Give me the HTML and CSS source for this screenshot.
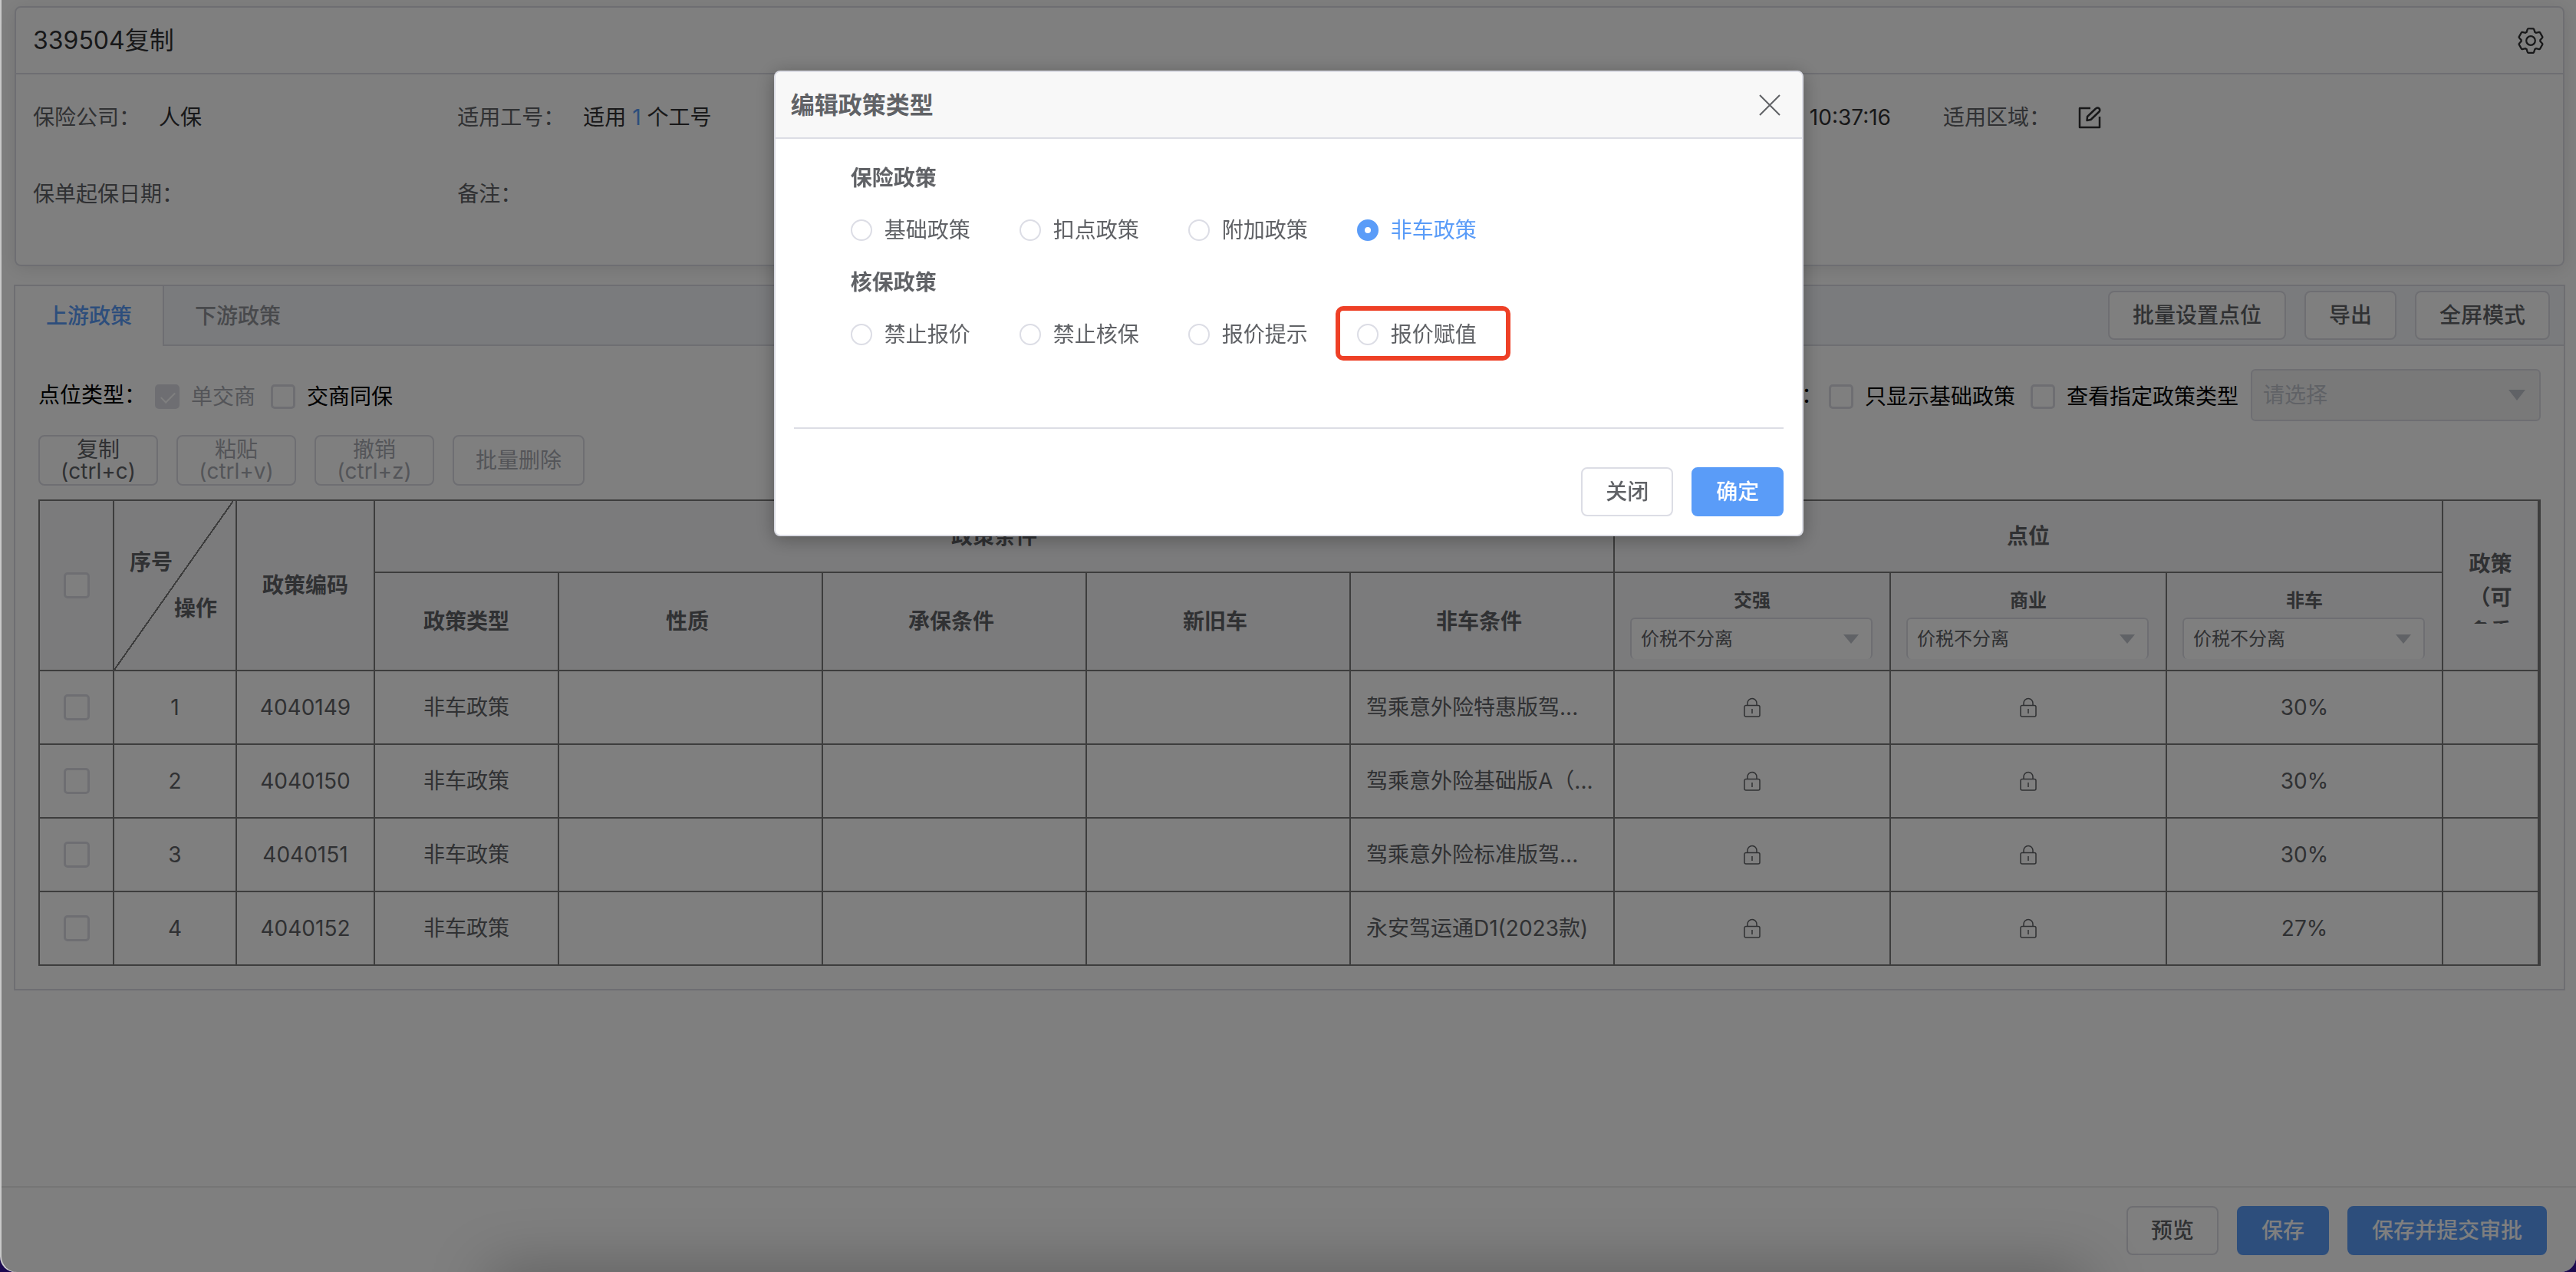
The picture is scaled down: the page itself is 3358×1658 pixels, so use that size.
FILE: index.html
```html
<!doctype html>
<html lang="zh-CN">

<head>
    <meta charset="UTF-8">
    <title>339504复制</title>
    <link rel="stylesheet" href="styles.css">
</head>

<body>
    <!-- icons -->
    <svg width="0" height="0" class="sprite">
        <symbol id="lock" viewBox="0 0 24 26">
            <path d="M4 10.500h16a2 2 0 0 1 2 2V23a2 2 0 0 1-2 2H4a2 2 0 0 1-2-2V12.500a2 2 0 0 1 2-2zM6 10V7.500a6 6 0 0 1 12 0V10M12 15v6" fill="none" stroke="currentColor" stroke-width="1.500" />
        </symbol>
    </svg>

    <div class="page">
        <section class="card">
            <div class="card-header">
                <span>339504复制</span>
                <button class="icon-btn" aria-label="设置">
                    <svg width="36" height="36" viewBox="0 0 1024 1024" fill="none" stroke="currentColor" stroke-width="64">
                        <path d="M600.704 64a32 32 0 0 1 30.464 22.208l35.2 109.376c14.784 7.232 28.928 15.36 42.432 24.512l112.384-24.192a32 32 0 0 1 34.432 15.36L944.32 364.8a32 32 0 0 1-4.032 37.504l-77.12 85.12a357.12 357.12 0 0 1 0 49.024l77.12 85.248a32 32 0 0 1 4.032 37.504l-88.704 153.6a32 32 0 0 1-34.432 15.296L708.8 803.904c-13.44 9.088-27.648 17.28-42.368 24.512l-35.264 109.376A32 32 0 0 1 600.704 960H423.296a32 32 0 0 1-30.464-22.208L357.696 828.48a351.616 351.616 0 0 1-42.56-24.64l-112.32 24.256a32 32 0 0 1-34.432-15.36L79.68 659.2a32 32 0 0 1 4.032-37.504l77.12-85.248a357.12 357.12 0 0 1 0-48.896l-77.12-85.248A32 32 0 0 1 79.68 364.8l88.704-153.6a32 32 0 0 1 34.432-15.296l112.32 24.256c13.568-9.152 27.776-17.408 42.56-24.64l35.2-109.312A32 32 0 0 1 423.232 64z" />
                        <circle cx="512" cy="512" r="165" />
                    </svg>
                </button>
            </div>
            <div class="card-body">
                <div class="info"><span class="info-label">保险公司：</span><span>人保</span></div>
                <div class="info"><span class="info-label">适用工号：</span><span>适用 <a href="#">1</a> 个工号</span></div>
                <div class="info info-time"><span>8 10:37:16</span></div>
                <div class="info"><span class="info-label">适用区域：</span>
                    <button class="icon-btn" aria-label="编辑适用区域">
                        <svg width="30" height="30" viewBox="0 0 30 30" fill="none" stroke="currentColor" stroke-width="2.500" stroke-linejoin="round">
                            <path d="M16 3H2v25h26V14" />
                            <path d="M23 3.500a3 3 0 0 1 4.500 4L16.500 18l-5 1 .5-5z" />
                        </svg>
                    </button>
                </div>
                <div class="info"><span class="info-label">保单起保日期：</span></div>
                <div class="info"><span class="info-label">备注：</span></div>
            </div>
        </section>

        <section class="panel">
            <div class="tabs">
                <button class="tab active">上游政策</button>
                <button class="tab">下游政策</button>
                <div class="tabs-right">
                    <button class="btn">批量设置点位</button>
                    <button class="btn">导出</button>
                    <button class="btn">全屏模式</button>
                </div>
            </div>

            <div class="panel-body">
                <div class="filters">
                    <span class="filter-title">点位类型：</span>
                    <label class="check disabled"><input type="checkbox" checked disabled>单交商</label>
                    <label class="check"><input type="checkbox">交商同保</label>
                    <div class="filters-right">
                        <span>：</span>
                        <label class="check"><input type="checkbox">只显示基础政策</label>
                        <label class="check"><input type="checkbox">查看指定政策类型</label>
                        <select class="select type-select" disabled aria-label="政策类型">
                            <option>请选择</option>
                        </select>
                    </div>
                </div>

                <div class="tools">
                    <button class="btn tool">复制<br>(ctrl+c)</button>
                    <button class="btn tool" disabled>粘贴<br>(ctrl+v)</button>
                    <button class="btn tool" disabled>撤销<br>(ctrl+z)</button>
                    <button class="btn tool wide" disabled>批量删除</button>
                </div>

                <table class="grid">
                    <colgroup>
                        <col class="c-check">
                        <col class="c-index">
                        <col class="c-code">
                        <col class="c-type">
                        <col class="c-cond">
                        <col class="c-cond">
                        <col class="c-cond">
                        <col class="c-cond">
                        <col class="c-point">
                        <col class="c-point">
                        <col class="c-point">
                        <col>
                    </colgroup>
                    <thead>
                        <tr class="head-top">
                            <th rowspan="2"><input type="checkbox" aria-label="全选"></th>
                            <th rowspan="2" class="diagonal">
                                <div class="th-index">序号</div>
                                <div class="th-action">操作</div>
                            </th>
                            <th rowspan="2">政策编码</th>
                            <th colspan="5">政策条件</th>
                            <th colspan="3">点位</th>
                            <th rowspan="2">
                                <div class="th-clip">政策（可多重</div>
                            </th>
                        </tr>
                        <tr class="head-sub">
                            <th>政策类型</th>
                            <th class="cond">性质</th>
                            <th class="cond">承保条件</th>
                            <th class="cond">新旧车</th>
                            <th class="cond">非车条件</th>
                            <th class="point">
                                <label for="p1">交强</label>
                                <select id="p1" class="select"><option>价税不分离</option></select>
                            </th>
                            <th class="point">
                                <label for="p2">商业</label>
                                <select id="p2" class="select"><option>价税不分离</option></select>
                            </th>
                            <th class="point">
                                <label for="p3">非车</label>
                                <select id="p3" class="select"><option>价税不分离</option></select>
                            </th>
                        </tr>
                    </thead>
                    <tbody>
                        <tr>
                            <td><input type="checkbox" aria-label="选择 1"></td>
                            <td>1</td>
                            <td>4040149</td>
                            <td>非车政策</td>
                            <td></td>
                            <td></td>
                            <td></td>
                            <td class="long">驾乘意外险特惠版驾...</td>
                            <td><svg class="lock"><use href="#lock" /></svg></td>
                            <td><svg class="lock"><use href="#lock" /></svg></td>
                            <td>30%</td>
                            <td></td>
                        </tr>
                        <tr>
                            <td><input type="checkbox" aria-label="选择 2"></td>
                            <td>2</td>
                            <td>4040150</td>
                            <td>非车政策</td>
                            <td></td>
                            <td></td>
                            <td></td>
                            <td class="long">驾乘意外险基础版A（...</td>
                            <td><svg class="lock"><use href="#lock" /></svg></td>
                            <td><svg class="lock"><use href="#lock" /></svg></td>
                            <td>30%</td>
                            <td></td>
                        </tr>
                        <tr>
                            <td><input type="checkbox" aria-label="选择 3"></td>
                            <td>3</td>
                            <td>4040151</td>
                            <td>非车政策</td>
                            <td></td>
                            <td></td>
                            <td></td>
                            <td class="long">驾乘意外险标准版驾...</td>
                            <td><svg class="lock"><use href="#lock" /></svg></td>
                            <td><svg class="lock"><use href="#lock" /></svg></td>
                            <td>30%</td>
                            <td></td>
                        </tr>
                        <tr>
                            <td><input type="checkbox" aria-label="选择 4"></td>
                            <td>4</td>
                            <td>4040152</td>
                            <td>非车政策</td>
                            <td></td>
                            <td></td>
                            <td></td>
                            <td class="long">永安驾运通D1(2023款)</td>
                            <td><svg class="lock"><use href="#lock" /></svg></td>
                            <td><svg class="lock"><use href="#lock" /></svg></td>
                            <td>27%</td>
                            <td></td>
                        </tr>
                    </tbody>
                </table>
            </div>
        </section>

        <footer class="footer">
            <button class="btn">预览</button>
            <button class="btn primary">保存</button>
            <button class="btn primary">保存并提交审批</button>
        </footer>
    </div>

    <div class="mask">
        <div class="dialog" role="dialog" aria-labelledby="dialog-title">
            <div class="dialog-header">
                <span id="dialog-title">编辑政策类型</span>
                <button class="icon-btn" aria-label="关闭窗口">
                    <svg width="28" height="28" viewBox="0 0 28 28" stroke="currentColor" stroke-width="2">
                        <path d="M1 1l26 26M27 1L1 27" />
                    </svg>
                </button>
            </div>
            <div class="dialog-body">
                <h4>保险政策</h4>
                <div class="radios">
                    <label class="radio"><input type="radio" name="policy">基础政策</label>
                    <label class="radio"><input type="radio" name="policy">扣点政策</label>
                    <label class="radio"><input type="radio" name="policy">附加政策</label>
                    <label class="radio"><input type="radio" name="policy" checked>非车政策</label>
                </div>
                <h4>核保政策</h4>
                <div class="radios">
                    <label class="radio"><input type="radio" name="policy">禁止报价</label>
                    <label class="radio"><input type="radio" name="policy">禁止核保</label>
                    <label class="radio"><input type="radio" name="policy">报价提示</label>
                    <label class="radio marked"><input type="radio" name="policy">报价赋值</label>
                </div>
            </div>
            <div class="dialog-footer">
                <button class="btn">关闭</button>
                <button class="btn primary">确定</button>
            </div>
        </div>
    </div>
    <div class="dock-shadow"></div>
</body>

</html>
```

FILE: styles.css
```css
* {
    box-sizing: border-box;
}

html,
body {
    height: 100%;
}

html {
    background-color: #1c0a50;
}

body {
    margin: 0;
    border-left: 2px solid #c8c8c8;
    border-radius: 0 0 20px 20px;
    background-color: #fff;
    color: #303133;
    font: 28px/40px Inter, "Noto Sans CJK SC", sans-serif;
    overflow: hidden;
}

button,
select {
    font: inherit;
    color: inherit;
}

a {
    color: #5a9cf8;
    text-decoration: none;
}

.sprite {
    position: absolute;
}

.page {
    display: flex;
    flex-direction: column;
    min-height: 100%;
    padding-top: 8px;
}

.icon-btn {
    display: flex;
    padding: 0;
    border: 0;
    background: none;
}

/* buttons */
.btn {
    height: 64px;
    padding: 0 30px;
    border: 2px solid #dcdde5;
    border-radius: 8px;
    background-color: #fff;
    color: #606266;
    font-weight: 500;
    white-space: nowrap;
}

.btn.primary {
    border-color: #5a9cf8;
    background-color: #5a9cf8;
    color: #fff;
}

/* checkboxes, radios, selects */
input[type=checkbox] {
    appearance: none;
    display: block;
    width: 32px;
    height: 32px;
    margin: 0;
    border: 3px solid #dcdde5;
    border-radius: 5px;
    background-color: #fff;
}

input[type=checkbox]:checked {
    position: relative;
    background-color: #dcdde5;
}

input[type=checkbox]:checked::after {
    content: "";
    position: absolute;
    left: 9px;
    top: 3px;
    width: 8px;
    height: 16px;
    border: solid #fff;
    border-width: 0 2px 2px 0;
    transform: rotate(45deg);
}

input[type=radio] {
    appearance: none;
    width: 28px;
    height: 28px;
    margin: 0;
    border: 2px solid #dcdde5;
    border-radius: 50%;
    background-color: #fff;
}

input[type=radio]:checked {
    border: 10px solid #5a9cf8;
}

.select {
    appearance: none;
    border: 2px solid #dcdde5;
    border-radius: 6px;
    background: #fff url("data:image/svg+xml,%3Csvg xmlns='http://www.w3.org/2000/svg' width='22' height='14'%3E%3Cpath d='M0 0h22L11 14z' fill='%23c0c4cc'/%3E%3C/svg%3E") no-repeat right 18px center;
}

/* summary card */
.card {
    margin: 0 15px 24px 17px;
    border: 2px solid #dcdde5;
    border-radius: 8px;
    box-shadow: 0 4px 24px rgba(0, 0, 0, .1);
}

.card-header {
    display: flex;
    align-items: center;
    justify-content: space-between;
    height: 87px;
    padding: 0 24px 0 22px;
    border-bottom: 2px solid #dcdde5;
    font-size: 32px;
}

.card-body {
    display: grid;
    grid-template-columns: 2fr 2fr 5fr 3fr;
    grid-auto-rows: 100px;
    padding: 6px 0 42px;
}

.info {
    display: flex;
    align-items: center;
    padding-left: 22px;
    white-space: nowrap;
}

.info-label {
    margin-right: 24px;
    color: #606266;
}

.info .icon-btn {
    margin-left: 12px;
}

.info-time {
    justify-content: flex-end;
    padding-right: 46px;
}

/* tabs */
.panel {
    margin: 0 14px 0 16px;
    border: 2px solid #dcdde5;
    padding-bottom: 30px;
}

.tabs {
    display: flex;
    height: 78px;
    border-bottom: 2px solid #dcdde5;
    background-color: #f5f7fa;
}

.tab {
    height: 78px;
    padding: 0 40px;
    border: 0;
    background: none;
    color: #909399;
    font-weight: 500;
}

.tab.active {
    border-right: 2px solid #dcdde5;
    background-color: #fff;
    color: #5a9cf8;
}

.tabs-right {
    display: flex;
    align-items: center;
    gap: 24px;
    margin-left: auto;
    padding-right: 18px;
}

.panel-body {
    padding: 30px 30px 0;
}

.filters {
    display: flex;
    align-items: center;
    gap: 20px;
    height: 68px;
    color: #000;
}

.filter-title {
    margin-right: -8px;
}

.filters-right {
    display: flex;
    align-items: center;
    gap: 20px;
    margin-left: auto;
}

.filters-right > span {
    margin-right: -12px;
}

.check {
    display: flex;
    align-items: center;
    gap: 15px;
    padding-top: 4px;
}

.check.disabled {
    color: #a8abb2;
}

.type-select {
    width: 378px;
    height: 68px;
    margin-left: -4px;
    padding: 0 14px;
    background-color: #f2f2f3;
    color: #c0c4cc;
    opacity: 1;
}

.tools {
    display: flex;
    gap: 24px;
    margin: 18px 0;
}

.tool {
    width: 156px;
    height: 66px;
    padding: 0;
    color: #606266;
    font-weight: 400;
    line-height: 28px;
}

.tool.wide {
    width: 172px;
}

.tool:disabled {
    color: #a8abb2;
}

/* policy table */
.grid {
    width: 100%;
    border-collapse: collapse;
    table-layout: fixed;
    border: 2px solid #7a7a7a;
    border-right-width: 4px;
    color: #606266;
    text-align: center;
}

.c-check { width: 97px; }
.c-index { width: 160px; }
.c-code { width: 180px; }
.c-type { width: 240px; }
.c-cond { width: 344px; }
.c-point { width: 360px; }

.grid th,
.grid td {
    padding: 0;
    border: 2px solid #7a7a7a;
}

.grid th {
    background-color: #f7f7f8;
    font-weight: 700;
}

.grid td {
    height: 96px;
}

.grid input {
    width: 34px;
    height: 34px;
    margin: 0 auto;
}

.head-top {
    height: 94px;
}

.head-sub {
    height: 128px;
}

.grid .cond {
    padding-right: 8px;
}

.grid .diagonal {
    background: #f7f7f8 linear-gradient(to bottom right, transparent calc(50% - 1px), #7a7a7a calc(50% - 1px), #7a7a7a calc(50% + 1px), transparent calc(50% + 1px)) no-repeat 0 0 / 155px 100%;
}

.th-index {
    padding: 0 0 20px 20px;
    text-align: left;
}

.th-action {
    padding-right: 24px;
    text-align: right;
}

.th-clip {
    height: 100px;
    padding: 0 24px;
    overflow: hidden;
    line-height: 44px;
}

.grid .point {
    padding-top: 4px;
    font-size: 24px;
    line-height: 36px;
}

.point label {
    display: block;
}

.point select {
    display: block;
    width: 316px;
    height: 54px;
    margin: 4px 0 0 20px;
    padding: 0 12px;
    border-bottom: 0;
    font-weight: 400;
    background-position: right 16px center;
    background-size: 20px 12px;
}

.grid .long {
    padding: 0 20px;
    text-align: left;
    white-space: nowrap;
}

.lock {
    display: block;
    width: 24px;
    height: 26px;
    margin: 0 auto;
}

/* bottom bar */
.footer {
    display: flex;
    justify-content: flex-end;
    gap: 24px;
    margin-top: auto;
    padding: 24px 38px 22px;
    border-top: 2px solid #eaeaea;
}

/* dialog */
.mask {
    position: fixed;
    inset: 0 0 0 2px;
    padding-top: 92px;
    border-radius: 0 0 20px 20px;
    background-color: rgba(0, 0, 0, .5);
}

.dialog {
    width: 40%;
    margin: 0 auto;
    border: 2px solid #dcdde5;
    border-radius: 8px;
    background-color: #fff;
    box-shadow: 0 4px 24px rgba(0, 0, 0, .3);
    color: #606266;
}

.dialog-header {
    display: flex;
    align-items: center;
    justify-content: space-between;
    height: 87px;
    padding: 0 28px 0 20px;
    border-bottom: 2px solid #dcdde5;
    border-radius: 6px 6px 0 0;
    background-color: #f8f8f8;
    font-size: 31px;
    font-weight: 700;
}

.dialog-body {
    height: 378px;
    margin: 0 24px;
    padding: 31px 72px 0 74px;
    border-bottom: 2px solid #dcdde5;
}

.dialog h4 {
    margin: 0;
    font-size: 28px;
}

.radios {
    display: flex;
    gap: 64px;
    padding: 28px 0;
}

.radio {
    position: relative;
    display: flex;
    align-items: center;
    gap: 16px;
}

.radio:has(:checked) {
    color: #5a9cf8;
}

.marked::after {
    content: "";
    position: absolute;
    inset: -17px -44px -14px -28px;
    border: 6px solid #ee4026;
    border-radius: 10px;
}

.dialog-footer {
    display: flex;
    justify-content: flex-end;
    gap: 24px;
    padding: 50px 24px 24px;
}

.dock-shadow {
    position: fixed;
    left: 19%;
    right: 19%;
    bottom: -60px;
    height: 60px;
    box-shadow: 0 0 80px rgba(0, 0, 0, .3);
}
```
